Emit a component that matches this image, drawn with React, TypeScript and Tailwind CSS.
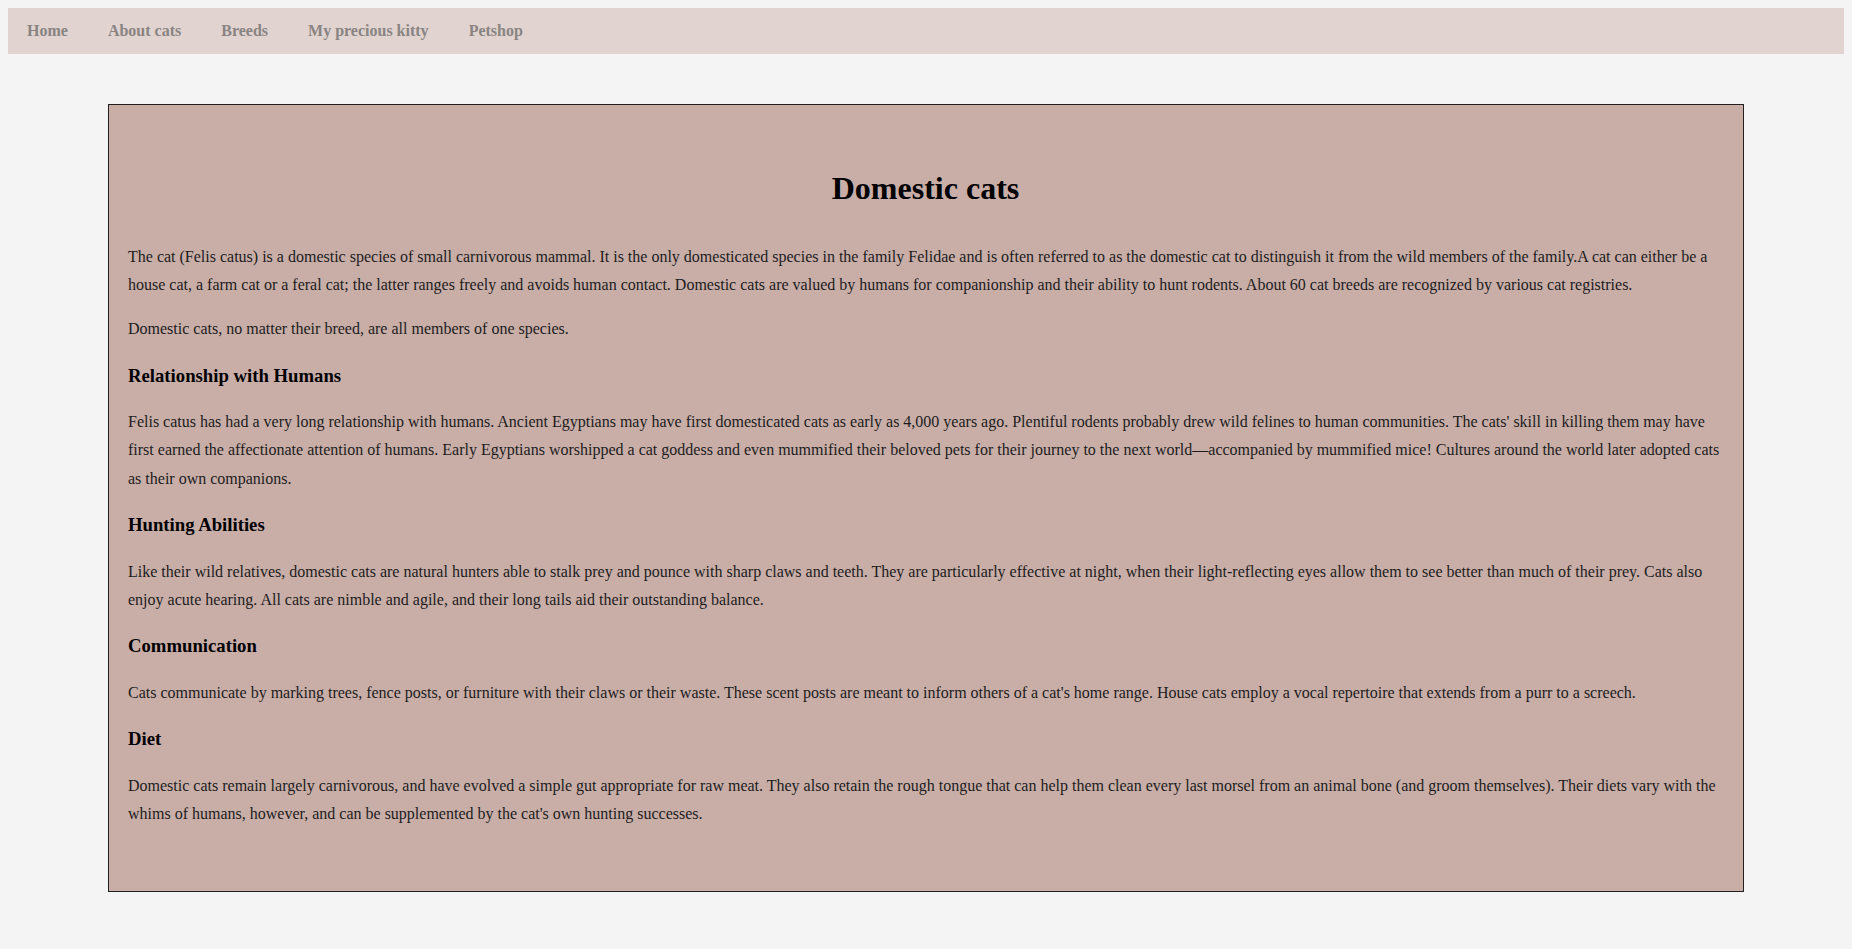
import React from "react";

const navItems = ["Home", "About cats", "Breeds", "My precious kitty", "Petshop"];

export default function App() {
  return (
    <div className="min-h-screen bg-[#f4f4f4] p-[8px] text-[16px] text-[#1c1c1c]" style={{ fontFamily: '"Liberation Serif", "Times New Roman", serif' }}>
      <nav className="bg-[#e0d3d0]">
        <ul className="-ml-px flex">
          {navItems.map((n) => (
            <li key={n}>
              <a href="#" className="block px-[20px] py-[14px] leading-[18px] font-bold text-[#8a8482]">
                {n}
              </a>
            </li>
          ))}
        </ul>
      </nav>
      <main className="mx-[100px] mt-[50px] border border-[#231f1f] bg-[#c9aea8] pl-[19px] pr-[20px] pt-[20px] pb-[63px]">
        <h1 className="mt-[43px] mb-[35px] text-center text-[32px] font-bold leading-[40px] text-black">Domestic cats</h1>
        <p className="my-[16px] leading-[28.2px]">
          The cat (Felis catus) is a domestic species of small carnivorous mammal. It is the only domesticated species in the family Felidae and is often referred to as the domestic cat to distinguish it from the wild members of the family.A cat can either be a house cat, a farm cat or a feral cat; the latter ranges freely and avoids human contact. Domestic cats are valued by humans for companionship and their ability to hunt rodents. About 60 cat breeds are recognized by various cat registries.
        </p>
        <p className="my-[16px] leading-[28.2px]">Domestic cats, no matter their breed, are all members of one species.</p>
        <h3 className="my-[18.3px] text-[18.72px] font-bold leading-[28px] text-black">Relationship with Humans</h3>
        <p className="my-[16px] leading-[28.2px]">
          Felis catus has had a very long relationship with humans. Ancient Egyptians may have first domesticated cats as early as 4,000 years ago. Plentiful rodents probably drew wild felines to human communities. The cats' skill in killing them may have first earned the affectionate attention of humans. Early Egyptians worshipped a cat goddess and even mummified their beloved pets for their journey to the next world—accompanied by mummified mice! Cultures around the world later adopted cats as their own companions.
        </p>
        <h3 className="my-[18.4px] text-[18.72px] font-bold leading-[28px] text-black">Hunting Abilities</h3>
        <p className="my-[16px] leading-[28.2px]">
          Like their wild relatives, domestic cats are natural hunters able to stalk prey and pounce with sharp claws and teeth. They are particularly effective at night, when their light-reflecting eyes allow them to see better than much of their prey. Cats also enjoy acute hearing. All cats are nimble and agile, and their long tails aid their outstanding balance.
        </p>
        <h3 className="my-[18.4px] text-[18.72px] font-bold leading-[28px] text-black">Communication</h3>
        <p className="my-[16px] leading-[28.2px]">
          Cats communicate by marking trees, fence posts, or furniture with their claws or their waste. These scent posts are meant to inform others of a cat's home range. House cats employ a vocal repertoire that extends from a purr to a screech.
        </p>
        <h3 className="my-[18.4px] text-[18.72px] font-bold leading-[28px] text-black">Diet</h3>
        <p className="mt-[16px] mb-0 leading-[28.2px]">
          Domestic cats remain largely carnivorous, and have evolved a simple gut appropriate for raw meat. They also retain the rough tongue that can help them clean every last morsel from an animal bone (and groom themselves). Their diets vary with the whims of humans, however, and can be supplemented by the cat's own hunting successes.
        </p>
      </main>
    </div>
  );
}
